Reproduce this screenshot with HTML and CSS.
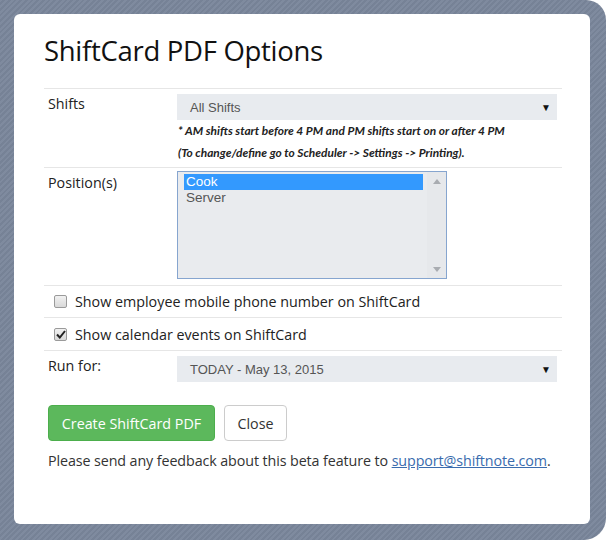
FILE: index.html
```html
<!DOCTYPE html>
<html>
<head>
<meta charset="utf-8">
<link rel="stylesheet" href="styles.css">
</head>
<body>
<div class="frame">
  <div class="modal">
    <h1 class="title">ShiftCard PDF Options</h1>
    <div class="form">
      <div class="row row-shifts">
        <div class="label">Shifts</div>
        <div class="field">
          <div class="select"><span>All Shifts</span><span class="arrow">&#9660;</span></div>
          <div class="note">* AM shifts start before 4 PM and PM shifts start on or after 4 PM</div>
          <div class="note">(To change/define go to Scheduler -&gt; Settings -&gt; Printing).</div>
        </div>
      </div>
      <div class="row row-pos">
        <div class="label">Position(s)</div>
        <div class="field">
          <div class="listbox">
            <div class="options">
              <div class="opt selected">Cook</div>
              <div class="opt">Server</div>
            </div>
            <div class="scrollbar">
              <svg width="8" height="5" viewBox="0 0 8 5"><path d="M0 5 L4 0 L8 5 Z" fill="#a9acb1"/></svg>
              <svg width="8" height="5" viewBox="0 0 8 5"><path d="M0 0 L4 5 L8 0 Z" fill="#a9acb1"/></svg>
            </div>
          </div>
        </div>
      </div>
      <div class="row check-row">
        <span class="cb"></span>
        <span class="cb-label">Show employee mobile phone number on ShiftCard</span>
      </div>
      <div class="row check-row check-row-2">
        <span class="cb"><svg width="10" height="9" viewBox="0 0 10 9"><path d="M1 4.5 L3.8 7.5 L9 1" fill="none" stroke="#222" stroke-width="2"/></svg></span>
        <span class="cb-label">Show calendar events on ShiftCard</span>
      </div>
      <div class="row">
        <div class="label">Run for:</div>
        <div class="field">
          <div class="select"><span>TODAY - May 13, 2015</span><span class="arrow">&#9660;</span></div>
        </div>
      </div>
    </div>
    <div class="buttons">
      <div class="btn btn-green">Create ShiftCard PDF</div>
      <div class="btn btn-white">Close</div>
    </div>
    <p class="feedback">Please send any feedback about this beta feature to <a href="#">support@shiftnote.com</a>.</p>
  </div>
</div>
</body>
</html>
```
FILE: styles.css
```css
html, body {
  margin: 0;
  padding: 0;
  background: #ffffff;
}
.frame {
  width: 606px;
  height: 540px;
  box-sizing: border-box;
  padding: 14px 16px 16px 14px;
  background-color: #7a869b;
  background-image: repeating-linear-gradient(135deg, rgba(255,255,255,0.04) 0 2px, rgba(0,0,0,0.03) 2px 4px);
  border-radius: 0 20px 22px 0;
}
.modal {
  background: #ffffff;
  height: 510px;
  box-sizing: border-box;
  border-radius: 6px;
  padding: 22px 28px 0 30px;
  font-family: "Open Sans", "Noto Sans", sans-serif;
  color: #333;
}
.title {
  margin: 0 0 22px 0;
  font-weight: 400;
  font-size: 27.5px;
  line-height: 30px;
  color: #111;
  letter-spacing: -0.3px;
}
.row {
  display: flex;
  border-top: 1px solid #e6e6e6;
}
.label {
  width: 129px;
  padding: 5px 0 0 4px;
  font-size: 14.3px;
  line-height: 20px;
  color: #222;
}
.field {
  flex: 1;
  padding-top: 5px;
  padding-right: 5px;
}
.row-shifts .field {
  padding-bottom: 3px;
}
.select {
  display: flex;
  justify-content: space-between;
  align-items: center;
  height: 26px;
  background: #e8ebef;
  padding: 0 6px 0 13px;
  font-family: "Liberation Sans", Arial, sans-serif;
  font-size: 13px;
  color: #555;
}
.arrow {
  font-size: 10px;
  color: #111;
}
.note {
  font-family: "Lato", sans-serif;
  font-style: italic;
  font-weight: 700;
  font-size: 11.9px;
  line-height: 22px;
  color: #222;
  padding-left: 1px;
}
.row-pos .field {
  padding-top: 3px;
  padding-bottom: 6px;
}
.listbox {
  width: 268px;
  height: 106px;
  border: 1px solid #86a5cf;
  background: #e9ebee;
  display: flex;
  font-family: "Liberation Sans", Arial, sans-serif;
  font-size: 13.5px;
}
.options {
  flex: 1;
  padding: 2px 4px 0 6px;
}
.opt {
  line-height: 16px;
  padding-left: 2px;
  color: #555;
}
.opt.selected {
  background: #3399fe;
  color: #fff;
}
.scrollbar {
  width: 19px;
  background: #e6e8eb;
  display: flex;
  flex-direction: column;
  justify-content: space-between;
  align-items: center;
  padding: 7px 0 6px;
}
.check-row {
  align-items: center;
  height: 31px;
  padding-left: 10px;
}
.check-row-2 {
  height: 32px;
}
.cb {
  width: 11px;
  height: 11px;
  border: 1px solid #9a9a9a;
  border-radius: 2px;
  background: linear-gradient(#f1f1f1, #d9d9d9);
  display: flex;
  align-items: center;
  justify-content: center;
  margin-right: 8px;
}
.cb-label {
  font-size: 14.3px;
  color: #222;
}
.buttons {
  display: flex;
  gap: 9px;
  margin-top: 23px;
  padding-left: 4px;
}
.btn {
  height: 36px;
  box-sizing: border-box;
  border-radius: 4px;
  display: flex;
  align-items: center;
  justify-content: center;
  font-size: 14.3px;
}
.btn-green {
  width: 167px;
  background: #5cb85c;
  border: 1px solid #4cae4c;
  color: #fff;
}
.btn-white {
  width: 63px;
  background: #fff;
  border: 1px solid #cccccc;
  color: #333;
}
.feedback {
  margin: 10px 0 0 4px;
  font-size: 14.3px;
  line-height: 20px;
  color: #333;
  white-space: nowrap;
  letter-spacing: -0.1px;
}
.feedback a {
  color: #3a6cae;
  text-decoration: underline;
}
```
